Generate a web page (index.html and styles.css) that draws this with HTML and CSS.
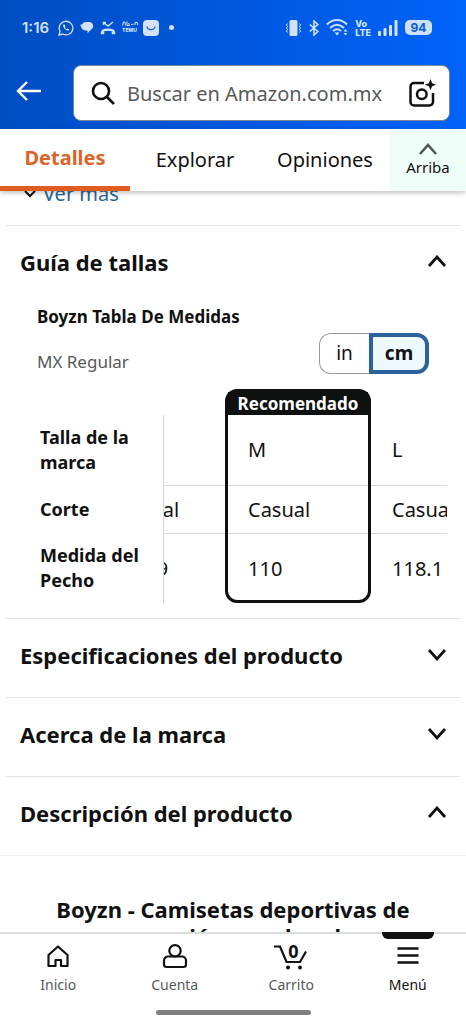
FILE: index.html
```html
<!DOCTYPE html>
<html lang="es">
<head>
<meta charset="utf-8">
<meta name="viewport" content="width=device-width, initial-scale=1">
<title>Detalles del producto</title>
<link rel="stylesheet" href="styles.css">
</head>
<body>
<div class="app">
  <header class="top">
    <div class="status">
      <time class="clock">1:16</time>
      <div class="status-left">
        <svg width="16" height="16" viewBox="0 0 16 16" fill="none" stroke="currentColor" stroke-width="1.3"><path d="M1 15l1-3.8A6.8 6.8 0 1 1 4.700 14z"/><path d="M5.300 4.600c-1.200 2 2.300 6.200 5 6.100l1-1.200-1.800-1-.9.7c-.8-.4-1.500-1.200-1.800-1.900l.7-.8-.8-1.900z" fill="currentColor" stroke="none"/></svg>
        <svg width="14" height="14" viewBox="0 0 14 14" fill="currentColor"><path d="M5.500 1h3.500a4 4 0 0 1 3 6.800c-.8.8-2.500 2-4.500 4.700V9.500H5A4 4 0 0 1 1.500 7L.3 3.500h1.800C3 2 4 1 5.500 1z"/></svg>
        <svg width="16" height="14" viewBox="0 0 16 14" fill="none" stroke="currentColor"><path d="M3.500 1.500L8 5l5-4M3.500 4V1.500H6" stroke-width="1.400"/><path d="M2 11.500c0-3.800 12-3.800 12 0" stroke-width="2.200"/><path d="M.8 12h3.500M11.700 12h3.500" stroke-width="2.600"/></svg>
        <span class="temu"><svg width="16" height="5" viewBox="0 0 16 5" fill="none" stroke="currentColor"><path d="M.5 4.500l1-3.500h1.500l.5 3.500M5 .5v4h2.500l-1-2.500M9 4l1.500-1 1 1M13 4V1.500h2.500V4"/></svg><span>TEMU</span></span>
        <svg width="16" height="16" viewBox="0 0 16 16"><rect width="16" height="16" rx="4" fill="currentColor"/><path d="M4 6.500c.8 4.200 7.200 4.200 8 0" fill="none" stroke="#0857cf" stroke-width="1.300"/></svg>
        <span class="dot"></span>
      </div>
      <div class="status-right">
        <svg width="17" height="16" viewBox="0 0 17 16" fill="none" stroke="currentColor"><rect x="4.500" y="0" width="8" height="16" rx="1.500" fill="currentColor" stroke="none"/><path d="M2.500 3.500l-1 1.500 1 1.500-1 1.500 1 1.500-1 1.500 1 1.500M14.500 3.500l1 1.500-1 1.500 1 1.500-1 1.500 1 1.500-1 1.500"/></svg>
        <svg width="10" height="16" viewBox="0 0 10 16" fill="none" stroke="currentColor" stroke-width="1.600"><path d="M.8 4.500l8 7L5 15V1l3.800 3.500-8 7"/></svg>
        <svg width="22" height="17" viewBox="0 0 22 17" fill="none" stroke="currentColor" stroke-width="2"><path d="M1 5.500c6-6 14-6 20 0M4 9c4.500-4.200 9.500-4.200 14 0M7 12c2.500-2.200 5.500-2.200 8 0"/><path d="M8.500 13.500h5L11 16.500z" fill="currentColor" stroke="none"/><path d="M17.500 12.500h4l-2-2.500zM17.500 14h4l-2 2.500z" fill="currentColor" stroke="none"/></svg>
        <span class="volte"><span>Vo</span><span>LTE</span></span>
        <svg width="20" height="16" viewBox="0 0 20 16" fill="currentColor"><rect x="0" y="11" width="3" height="5" rx="1"/><rect x="5.500" y="8" width="3" height="8" rx="1"/><rect x="11" y="5" width="3" height="11" rx="1"/><rect x="16.500" y="0" width="3" height="16" rx="1"/></svg>
        <span class="battery">94</span>
      </div>
    </div>
    <div class="search-row">
      <button class="plain back" aria-label="Atrás"><svg width="26" height="20" viewBox="0 0 26 20" fill="none" stroke="currentColor" stroke-width="2.400"><path d="M25 10H2M11 1L2 10l9 9"/></svg></button>
      <form class="search">
        <svg width="24" height="24" viewBox="0 0 24 24" fill="none" stroke="#111" stroke-width="2.600"><circle cx="10" cy="10" r="8"/><path d="M16 16l7 7"/></svg>
        <input type="text" aria-label="Buscar" placeholder="Buscar en Amazon.com.mx">
        <button type="button" class="plain" aria-label="Buscar con cámara"><svg width="28" height="28" viewBox="0 0 28 28" fill="none" stroke="#111" stroke-width="2.500"><path d="M16 4H6a3.500 3.500 0 0 0-3.500 3.500V23A3.500 3.500 0 0 0 6 26.500h15.500A3.500 3.500 0 0 0 25 23V14"/><circle cx="13.800" cy="15.300" r="4.800"/><path d="M22.500 0l1.600 4.200 4 1.500-4 1.500-1.600 4-1.600-4-4-1.500 4-1.500z" fill="#111" stroke="none"/></svg></button>
      </form>
    </div>
    <nav class="tabs" aria-label="Secciones">
      <a href="#detalles" class="tab tab-active">Detalles</a>
      <a href="#explorar" class="tab">Explorar</a>
      <a href="#opiniones" class="tab">Opiniones</a>
      <a href="#arriba" class="up"><svg width="20" height="12" viewBox="0 0 20 12" fill="none" stroke="#555" stroke-width="2.600"><path d="M2 11l8-9 8 9"/></svg>Arriba</a>
    </nav>
  </header>

  <main class="content" id="detalles">
    <a href="#mas" class="more"><svg width="12" height="8" viewBox="0 0 12 8" fill="none" stroke="#111" stroke-width="2"><path d="M1 1l5 5 5-5"/></svg>Ver más</a>

    <section class="section">
      <button class="plain section-head" aria-expanded="true"><span>Guía de tallas</span><svg width="20" height="14" viewBox="0 0 20 14" fill="none" stroke="#111" stroke-width="2.800"><path d="M2 11l8-9 8 9"/></svg></button>
      <div class="guide">
        <h2 class="guide-title">Boyzn Tabla De Medidas</h2>
        <div class="guide-row">
          <span class="fit">MX Regular</span>
          <div class="units" role="group" aria-label="Unidades">
            <button class="unit">in</button><button class="unit unit-on" aria-pressed="true">cm</button>
          </div>
        </div>
        <div class="sizes">
          <table>
            <colgroup><col class="col-head"><col class="col-s"><col class="col-m"><col></colgroup>
            <tr class="tall"><th scope="row">Talla de la marca</th><td class="cut"></td><td>M</td><td>L</td></tr>
            <tr><th scope="row">Corte</th><td class="cut"><div><span>Casual</span></div></td><td>Casual</td><td>Casual</td></tr>
            <tr class="tall"><th scope="row">Medida del Pecho</th><td class="cut"><div><span>101.9</span></div></td><td>110</td><td>118.1</td></tr>
          </table>
          <div class="pick"><span>Recomendado</span></div>
        </div>
      </div>
    </section>

    <section class="section">
      <button class="plain section-head" aria-expanded="false"><span>Especificaciones del producto</span><svg width="20" height="14" viewBox="0 0 20 14" fill="none" stroke="#111" stroke-width="2.800"><path d="M2 2l8 9 8-9"/></svg></button>
    </section>
    <section class="section">
      <button class="plain section-head" aria-expanded="false"><span>Acerca de la marca</span><svg width="20" height="14" viewBox="0 0 20 14" fill="none" stroke="#111" stroke-width="2.800"><path d="M2 2l8 9 8-9"/></svg></button>
    </section>
    <section class="section">
      <button class="plain section-head" aria-expanded="true"><span>Descripción del producto</span><svg width="20" height="14" viewBox="0 0 20 14" fill="none" stroke="#111" stroke-width="2.800"><path d="M2 11l8-9 8 9"/></svg></button>
      <div class="description"><h2>Boyzn - Camisetas deportivas de compresión para hombre</h2></div>
    </section>
  </main>

  <footer class="bottom">
    <nav class="bottom-nav" aria-label="Principal">
      <a href="#inicio" class="item"><svg width="26" height="26" viewBox="0 0 26 26" fill="none" stroke="#111" stroke-width="2.200"><path d="M3.500 22V11L13 2.500l9.500 8.500v11H16v-6h-5.500v6z" stroke-linejoin="round"/></svg>Inicio</a>
      <a href="#cuenta" class="item"><svg width="26" height="26" viewBox="0 0 26 26" fill="none" stroke="#111" stroke-width="2.200"><circle cx="13" cy="6.800" r="5.700"/><path d="M6 12.500h14a4 4 0 0 1 4 4v4a2.500 2.500 0 0 1-2.500 2.500h-17A2.500 2.500 0 0 1 2 20.500v-4a4 4 0 0 1 4-4z"/></svg>Cuenta</a>
      <a href="#carrito" class="item"><span class="cart"><svg width="34" height="26" viewBox="0 0 34 26" fill="none" stroke="#111" stroke-width="2.200"><path d="M0 2.500h6L12.500 18h13.500L32 7.500"/><circle cx="14" cy="23.500" r="2" fill="#111" stroke="none"/><circle cx="26" cy="23.500" r="2" fill="#111" stroke="none"/></svg><span class="count">0</span></span>Carrito</a>
      <a href="#menu" class="item item-on"><svg width="26" height="26" viewBox="0 0 26 26" stroke="#111" stroke-width="2.400"><path d="M2.500 4.500h21M2.500 11.500h21M2.500 18.500h21"/></svg>Menú</a>
    </nav>
    <div class="handle"></div>
  </footer>
</div>
</body>
</html>
```
FILE: styles.css
```css
* { box-sizing: border-box; }
body {
  margin: 0;
  font-family: "Noto Sans", "Open Sans", sans-serif;
  font-size: 20px;
  line-height: 25px;
  color: #111;
  background: #fff;
}
a { color: inherit; text-decoration: none; }
svg { display: block; flex: none; }
.plain { padding: 0; border: 0; background: none; color: inherit; font: inherit; }
.app { display: flex; flex-direction: column; height: 100vh; }

.top {
  position: relative;
  z-index: 2;
  flex: none;
  background: linear-gradient(90deg, #004dc2, #0063fa);
}
.status {
  display: flex;
  align-items: center;
  height: 55px;
  padding: 0 34px 0 22px;
  color: #d3e2fb;
  font-family: Inter, sans-serif;
}
.clock { font-size: 15px; font-weight: 600; width: 36px; }
.status-left { display: flex; align-items: center; gap: 6px; }
.status-left .dot { width: 5px; height: 5px; margin-left: 4px; border-radius: 50%; background: currentColor; }
.temu, .volte { display: flex; flex-direction: column; font-weight: 800; }
.temu { gap: 1px; width: 15px; font-size: 5px; line-height: 7px; }
.volte { font-size: 9px; line-height: 9px; }
.status-right { display: flex; align-items: center; gap: 7px; margin-left: auto; }
.battery {
  width: 27px;
  border-radius: 5px;
  background: #cfe0fb;
  color: #0a5ce6;
  font-size: 12px;
  font-weight: 700;
  line-height: 15px;
  text-align: center;
}

.search-row { display: flex; align-items: center; gap: 31px; padding: 10px 16px 8px; }
.back { padding-bottom: 4px; color: #fff; }
.search {
  display: flex;
  flex: 1;
  min-width: 0;
  align-items: center;
  gap: 12px;
  height: 56px;
  padding: 0 13px 0 17px;
  border: 1px solid #7a8794;
  border-radius: 8px;
  background: #fff;
}
.search input {
  flex: 1;
  min-width: 0;
  padding: 0;
  border: 0;
  outline: 0;
  background: none;
  font: inherit;
}
.search input::placeholder { color: #565959; opacity: 1; }

.tabs {
  display: flex;
  height: 62px;
  background: #fff;
  box-shadow: 0 2px 5px rgba(0, 0, 0, 0.25);
}
.tab { flex: 1; padding-top: 18px; text-align: center; }
.tab-active { border-bottom: 5px solid #e05c20; color: #db6429; font-weight: 700; padding-top: 16px; }
.up {
  display: flex;
  flex-direction: column;
  align-items: center;
  width: 76px;
  padding-top: 14px;
  background: #effdf9;
  font-size: 15px;
}

.content { flex: 1; min-height: 0; padding: 0 6px; overflow: hidden; }
.more {
  display: flex;
  align-items: center;
  gap: 7px;
  margin-top: -10px;
  padding: 0 18px 19px;
  color: #2b6595;
}
.section { border-top: 1px solid #e3e5e5; }
.section-head {
  display: flex;
  align-items: center;
  justify-content: space-between;
  width: 100%;
  height: 78px;
  padding: 0 13px 6px 14px;
  font-size: 22px;
  font-weight: 700;
  text-align: left;
}
.guide { padding: 0 13px 15px 31px; }
.guide-title { margin: 0 0 4px; font-size: 17px; }
.guide-row { display: flex; align-items: center; justify-content: space-between; padding-right: 18px; }
.fit { color: #565959; font-size: 17px; padding-top: 16px; }
.units { display: flex; }
.unit {
  height: 41px;
  width: 50px;
  padding: 0;
  border: 1px solid #999;
  border-right: 0;
  border-radius: 12px 0 0 12px;
  background: #fff;
  color: #111;
  font: inherit;
  font-size: 19px;
}
.unit-on { width: 60px; border: 4px solid #2a639c; border-radius: 0 12px 12px 0; background: #edf8ff; font-weight: 700; }

.sizes { position: relative; margin-top: 15px; padding-top: 26px; overflow: hidden; }
.sizes table { width: 100%; table-layout: fixed; border-collapse: collapse; }
.col-head { width: 126px; }
.col-s { width: 63px; }
.col-m { width: 144px; }
.sizes tr { height: 48px; }
.sizes tr.tall { height: 70px; }
.sizes th { padding: 0 10px 0 3px; text-align: left; font-size: 18px; border-right: 1px solid #d5d9d9; }
.sizes td { padding: 0 0 0 22px; overflow: hidden; white-space: nowrap; }
.sizes tr + tr td { border-top: 1px solid #d5d9d9; }
.sizes td.cut { padding: 0; }
.cut div { display: flex; justify-content: flex-end; overflow: hidden; }
.cut span { flex: none; width: 109px; }
.pick {
  position: absolute;
  top: 0;
  bottom: 0;
  left: 188px;
  width: 146px;
  border: 3px solid #0f1111;
  border-radius: 12px;
  pointer-events: none;
}
.pick span { display: block; background: #0f1111; color: #fff; font-size: 17px; font-weight: 700; line-height: 23px; text-align: center; }

.description { margin: 0 -6px; padding: 40px 40px 0; border-top: 1px solid #f0f1f1; }
.description h2 { margin: 0; font-size: 22px; line-height: 27px; text-align: center; }

.bottom { position: relative; z-index: 2; flex: none; border-top: 2px solid #d9dddd; background: #fff; }
.bottom-nav { display: flex; }
.item {
  position: relative;
  display: flex;
  flex: 1;
  flex-direction: column;
  align-items: center;
  gap: 4px;
  padding-top: 10px;
  color: #565959;
  font-size: 14px;
  line-height: 22px;
}
.item-on { color: #111; }
.item-on::before { content: ""; position: absolute; top: -2px; width: 52px; height: 7px; border-radius: 0 0 6px 6px; background: #0f1111; }
.cart { position: relative; }
.count { position: absolute; top: -4px; left: 14px; color: #111; font-size: 18px; font-weight: 700; }
.handle { width: 155px; height: 5px; margin: 14px auto 9px; border-radius: 3px; background: #808080; }
```
